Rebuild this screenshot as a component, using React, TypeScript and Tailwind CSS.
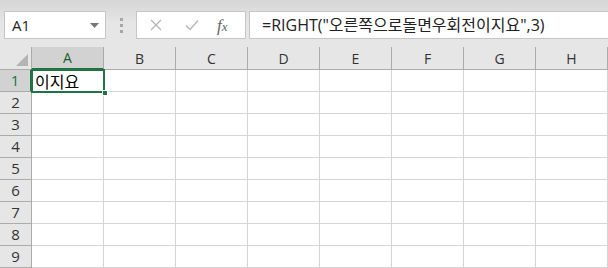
import React from "react";

const cols = ["A", "B", "C", "D", "E", "F", "G", "H"];
const rows = [1, 2, 3, 4, 5, 6, 7, 8, 9];

export default function App() {
  return (
    <div
      className="w-[608px] h-[268px] overflow-hidden bg-white relative"
      style={{ fontFamily: '"Open Sans", "Noto Sans", "Noto Sans CJK KR", sans-serif' }}
    >
      {/* formula bar */}
      <div className="h-[47px] bg-gradient-to-b from-[#d6d6d6] via-[#e6e6e6] to-[#e6e6e6] flex items-start pt-[11px]">
        <div className="ml-[4px] w-[102px] h-[28px] bg-white border border-[#c6c6c6] flex items-center justify-between pl-[7px] pr-[6px]">
          <span className="text-[15px] text-[#222]">A1</span>
          <svg width="9" height="5" viewBox="0 0 9 5">
            <path d="M0 0 H9 L4.5 5 Z" fill="#777" />
          </svg>
        </div>
        <div className="w-[30px] h-[28px] flex flex-col items-center justify-center gap-[3px]">
          <div className="w-[3px] h-[3px] bg-[#a6a6a6]" />
          <div className="w-[3px] h-[3px] bg-[#a6a6a6]" />
          <div className="w-[3px] h-[3px] bg-[#a6a6a6]" />
        </div>
        <div className="w-[110px] h-[28px] bg-white border border-[#c6c6c6] flex items-center">
          <svg className="ml-[13px]" width="12" height="12" viewBox="0 0 12 12">
            <path d="M1 1 L11 11 M11 1 L1 11" stroke="#b5b5b5" strokeWidth="1.3" />
          </svg>
          <svg className="ml-[23px]" width="14" height="12" viewBox="0 0 14 12">
            <path d="M1 6.5 L5 10.5 L13 1.5" stroke="#b5b5b5" strokeWidth="1.3" fill="none" />
          </svg>
          <span
            className="ml-[18px] text-[17px] italic text-[#666] leading-none"
            style={{ fontFamily: '"Liberation Serif", serif' }}
          >
            f<span className="text-[13px]">x</span>
          </span>
        </div>
        <div className="ml-[3px] flex-1 h-[28px] bg-white border border-[#c6c6c6] border-r-0 flex items-center pl-[12px]">
          <span
            className="text-[16px] text-[#222] whitespace-nowrap"
            style={{ fontFamily: '"Open Sans", "Noto Sans CJK KR", sans-serif' }}
          >
            =RIGHT("오른쪽으로돌면우회전이지요",3)
          </span>
        </div>
      </div>

      {/* column headers */}
      <div className="flex h-[23px] bg-[#e6e6e6]">
        <div className="w-[32px] h-[23px] border-r border-b border-[#ababab] relative">
          <svg className="absolute right-[3px] bottom-[3px]" width="12" height="12" viewBox="0 0 12 12">
            <path d="M12 0 V12 H0 Z" fill="#b4b4b4" />
          </svg>
        </div>
        {cols.map((c, i) => (
          <div
            key={c}
            className={
              i === 0
                ? "w-[72px] h-[23px] shrink-0 bg-[#d2d2d2] border-r border-[#ababab] border-b-2 border-b-[#217346] flex items-center justify-center text-[14px] text-[#1d5c36]"
                : "w-[72px] h-[23px] shrink-0 border-r border-b border-[#ababab] flex items-center justify-center text-[14px] text-[#333]"
            }
          >
            {c}
          </div>
        ))}
      </div>

      {/* rows */}
      {rows.map((r) => (
        <div key={r} className="flex h-[22px]">
          <div
            className={
              r === 1
                ? "w-[32px] h-[22px] shrink-0 bg-[#d2d2d2] border-r-2 border-r-[#217346] border-b border-b-[#ababab] flex items-center justify-center text-[15px] text-[#217346]"
                : "w-[32px] h-[22px] shrink-0 bg-[#e6e6e6] border-r border-b border-[#ababab] flex items-center justify-center text-[15px] text-[#333]"
            }
          >
            {r}
          </div>
          {cols.map((c) => (
            <div
              key={c}
              className="w-[72px] h-[22px] shrink-0 border-r border-b border-[#d4d4d4] flex items-center pl-[3px] text-[16px] font-normal text-black"
              style={{ fontFamily: '"Noto Sans CJK KR", sans-serif' }}
            >
              {r === 1 && c === "A" ? "이지요" : ""}
            </div>
          ))}
        </div>
      ))}

      {/* selection */}
      <div className="absolute left-[31px] top-[69px] w-[74px] h-[24px] border-2 border-[#217346] pointer-events-none" />
      <div className="absolute left-[102px] top-[90px] w-[6px] h-[6px] bg-[#217346] border border-white" />
    </div>
  );
}
